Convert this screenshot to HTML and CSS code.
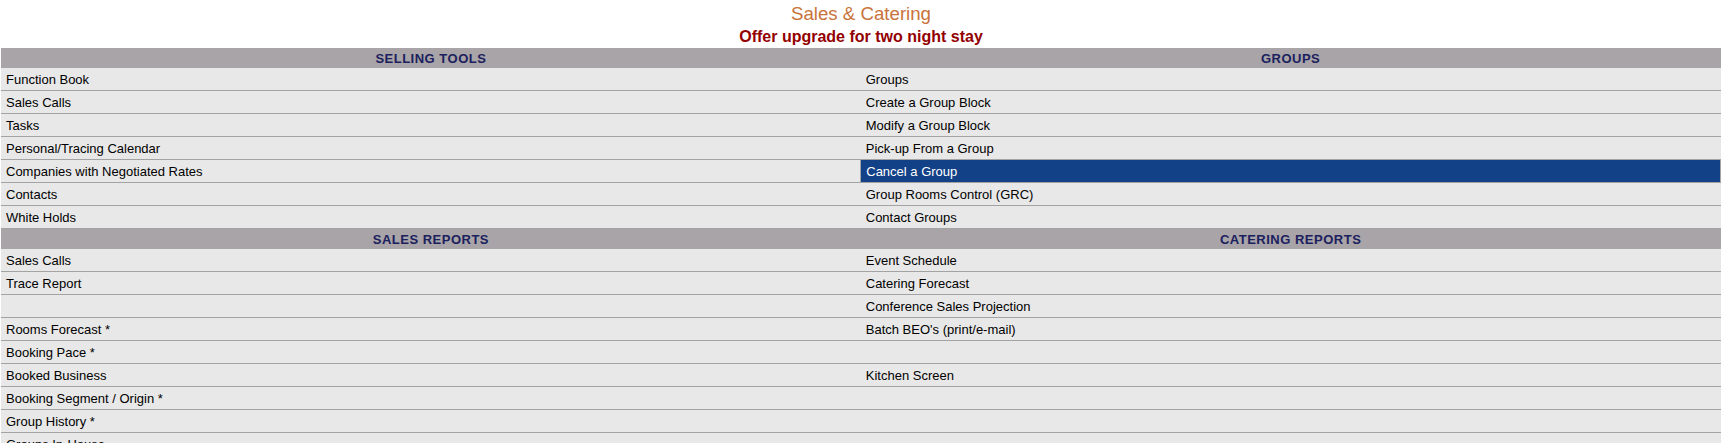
FILE: index.html
```html
<!DOCTYPE html>
<html lang="en">
<head>
  <meta charset="UTF-8">
  <title>Sales &amp; Catering</title>
  <link rel="stylesheet" href="styles.css">
</head>
<body>
  <header class="pageHead">
    <h1>Sales &amp; Catering</h1>
    <h2>Offer upgrade for two night stay</h2>
  </header>
  <table class="menu">
    <tbody>
      <tr class="secHead">
        <th>SELLING TOOLS</th>
        <th>GROUPS</th>
      </tr>
      <tr><td><a href="#">Function Book</a></td><td><a href="#">Groups</a></td></tr>
      <tr><td><a href="#">Sales Calls</a></td><td><a href="#">Create a Group Block</a></td></tr>
      <tr><td><a href="#">Tasks</a></td><td><a href="#">Modify a Group Block</a></td></tr>
      <tr><td><a href="#">Personal/Tracing Calendar</a></td><td><a href="#">Pick-up From a Group</a></td></tr>
      <tr><td><a href="#">Companies with Negotiated Rates</a></td><td class="selected"><a href="#">Cancel a Group</a></td></tr>
      <tr><td><a href="#">Contacts</a></td><td><a href="#">Group Rooms Control (GRC)</a></td></tr>
      <tr><td><a href="#">White Holds</a></td><td><a href="#">Contact Groups</a></td></tr>
    </tbody>
    <tbody>
      <tr class="secHead">
        <th>SALES REPORTS</th>
        <th>CATERING REPORTS</th>
      </tr>
      <tr><td><a href="#">Sales Calls</a></td><td><a href="#">Event Schedule</a></td></tr>
      <tr><td><a href="#">Trace Report</a></td><td><a href="#">Catering Forecast</a></td></tr>
      <tr><td></td><td><a href="#">Conference Sales Projection</a></td></tr>
      <tr><td><a href="#">Rooms Forecast *</a></td><td><a href="#">Batch BEO's (print/e-mail)</a></td></tr>
      <tr><td><a href="#">Booking Pace *</a></td><td></td></tr>
      <tr><td><a href="#">Booked Business</a></td><td><a href="#">Kitchen Screen</a></td></tr>
      <tr><td><a href="#">Booking Segment / Origin *</a></td><td></td></tr>
      <tr><td><a href="#">Group History *</a></td><td></td></tr>
      <tr><td><a href="#">Groups In-House</a></td><td></td></tr>
      <tr><td><a href="#">Lost Business</a></td><td></td></tr>
    </tbody>
  </table>
</body>
</html>
```

FILE: styles.css
```css
body {
  margin: 0;
  background: #fff;
  font-family: "Liberation Sans", Arial, sans-serif;
}
.pageHead {
  text-align: center;
  padding-top: 3px;
  padding-bottom: 2px;
}
.pageHead h1 {
  margin: 0;
  font-size: 18.67px;
  line-height: 22px;
  font-weight: normal;
  color: #c9733a;
}
.pageHead h2 {
  margin: 3px 0 0;
  font-size: 16px;
  line-height: 18px;
  font-weight: bold;
  color: #930000;
}
.menu {
  width: calc(100% - 2px);
  margin: 0 1px;
  border-collapse: collapse;
  table-layout: fixed;
  font-size: 13px;
}
.menu th {
  background: #a8a4a7;
  color: #1b205e;
  font-weight: bold;
  letter-spacing: 0.5px;
  line-height: 15px;
  padding: 3px 5px 2px;
  text-align: center;
}
.menu td {
  background: #e8e8e8;
  border-bottom: 1px solid #a3a3a3;
  line-height: 15px;
  height: 15px;
  padding: 4px 5px 3px;
}
.menu td a {
  color: #000;
  text-decoration: none;
}
.menu td.selected {
  background: #134187;
  border: 1px solid #a3a3a3;
}
.menu td.selected a {
  color: #fff;
}
```
